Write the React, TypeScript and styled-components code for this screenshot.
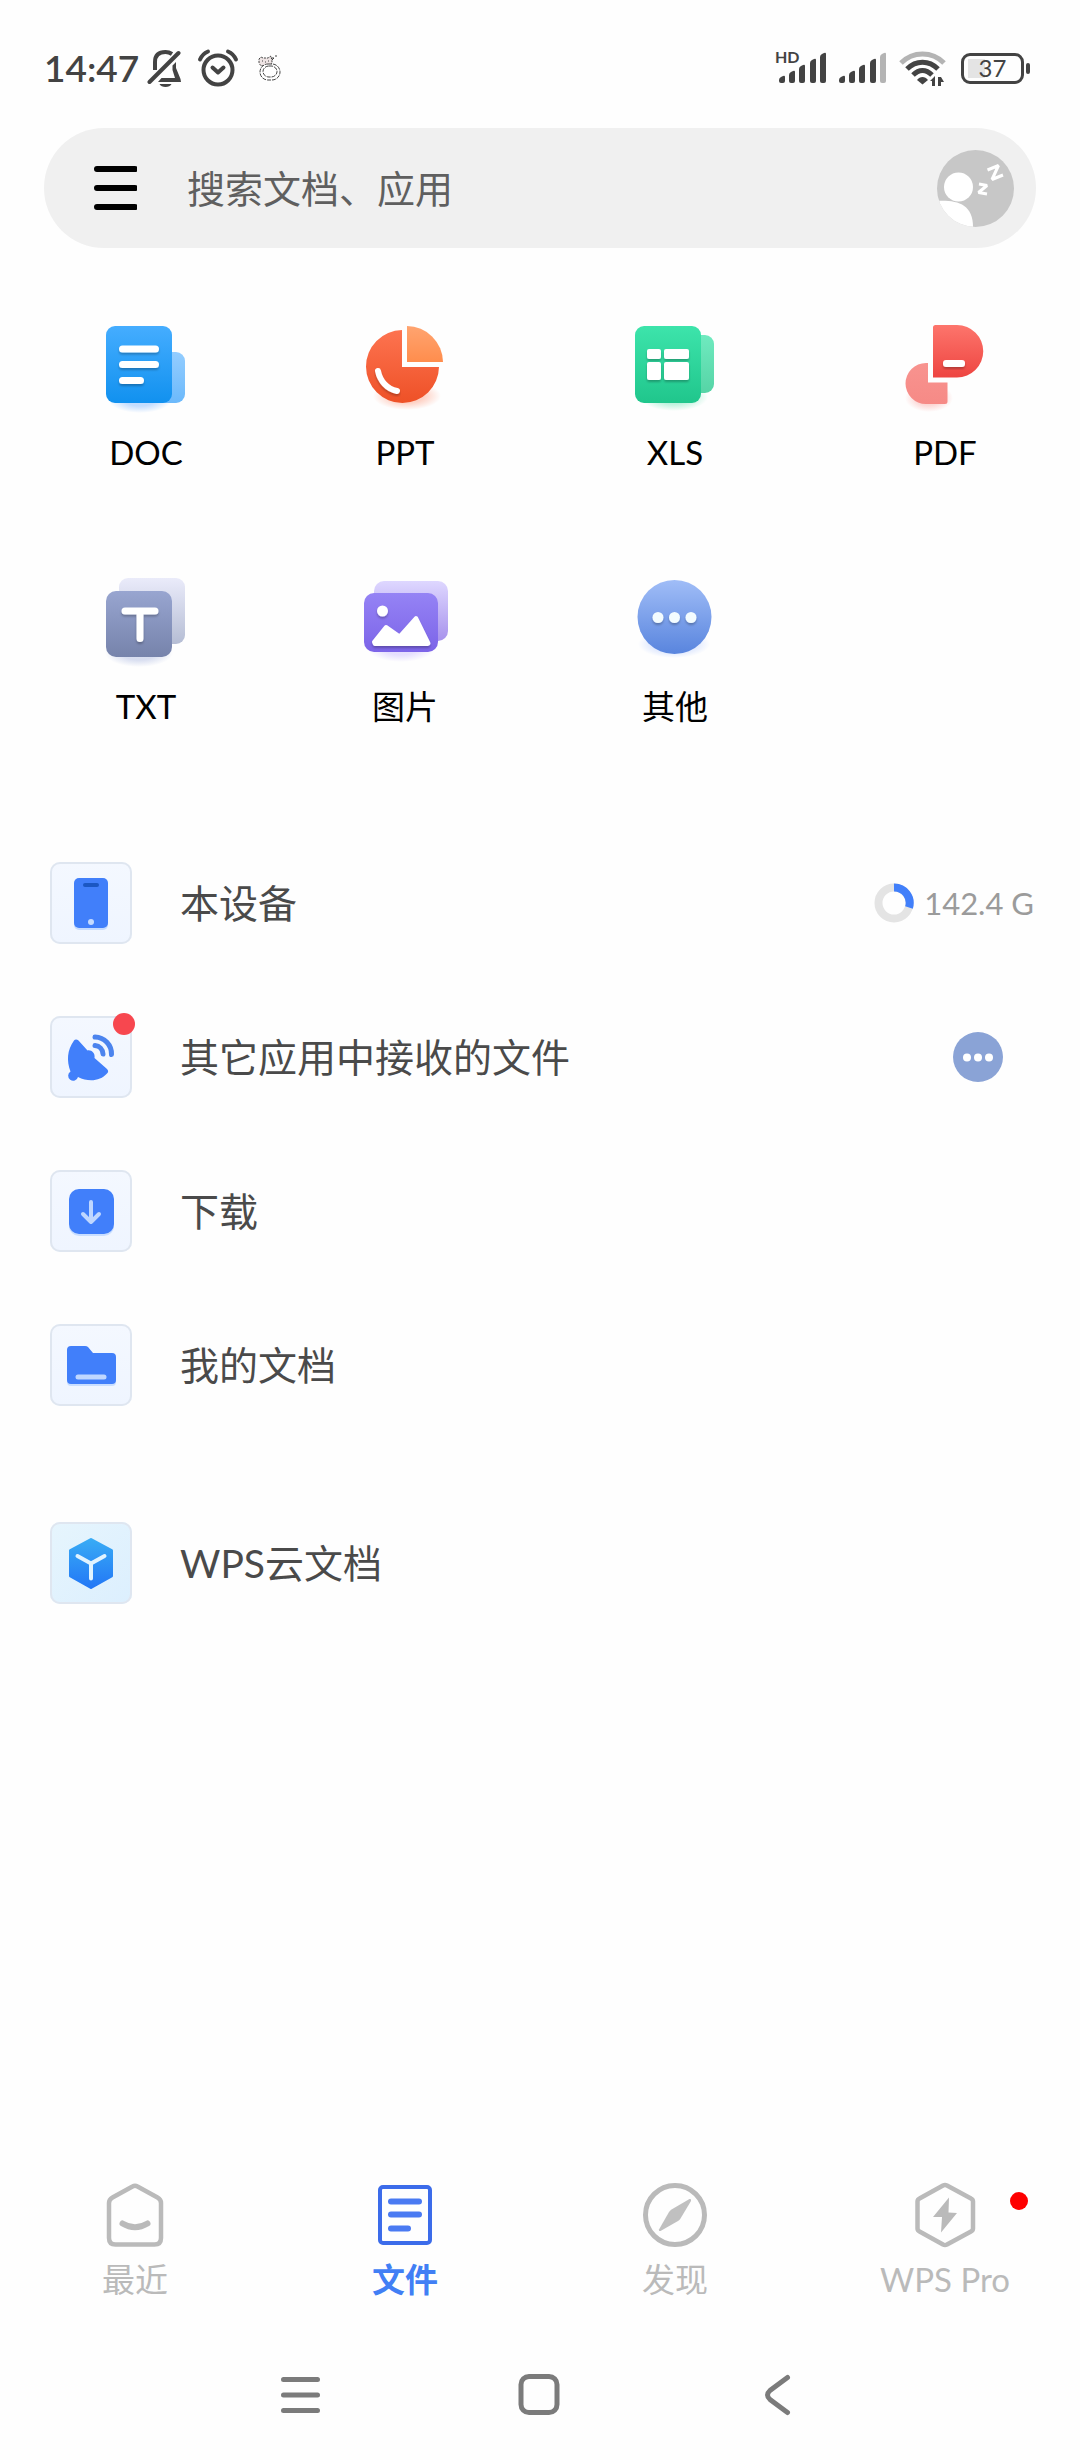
import React from "react";
import styled, { createGlobalStyle, css } from "styled-components";

const GlobalStyle = createGlobalStyle`
  *, *::before, *::after { box-sizing: border-box; }
  body {
    margin: 0;
    background: #fefefe;
    font-family: Lato, "Noto Sans CJK SC", sans-serif;
    color: #000;
  }
  button, input {
    font: inherit;
    color: inherit;
    border: 0;
    padding: 0;
    margin: 0;
    background: none;
  }
  button { cursor: pointer; }
  svg { display: block; flex: none; }
`;

const Screen = styled.div`
  min-height: 100vh;
  display: flex;
  flex-direction: column;
`;

/* ---------- status bar ---------- */

const StatusBar = styled.header`
  display: flex;
  align-items: center;
  justify-content: space-between;
  height: 44px;
  margin-top: 46px;
  padding: 0 50px 0 44px;
  color: #434343;
`;

const StatusGroup = styled.div<{ $gap: number }>`
  display: flex;
  align-items: center;
  gap: ${(p) => p.$gap}px;
`;

const Clock = styled.time`
  font-size: 37px;
  line-height: 44px;
  font-weight: 600;
`;

const Battery = styled.div`
  position: relative;
  display: flex;
  align-items: center;
  justify-content: center;
  width: 63px;
  height: 31px;
  margin-right: 6px;
  border: 3px solid #434343;
  border-radius: 9px;
  background: linear-gradient(90deg, #e4e4e4 17px, transparent 17px) 4px 3px / 46px 19px no-repeat;
  font-size: 24px;
  line-height: 24px;
  &::after {
    content: "";
    position: absolute;
    right: -9px;
    top: 7px;
    width: 4px;
    height: 11px;
    border-radius: 2px;
    background: #434343;
  }
`;

/* ---------- search ---------- */

const SearchBar = styled.form`
  display: flex;
  align-items: center;
  height: 120px;
  margin: 38px 44px 0;
  padding: 0 22px 0 49px;
  border-radius: 60px;
  background: #f0f0f0;
`;

const SearchInput = styled.input`
  flex: 1;
  min-width: 0;
  height: 80px;
  margin: 0 24px 0 50px;
  font-size: 38px;
  color: #5f5f5f;
  outline: none;
  &::placeholder {
    color: #5f5f5f;
    opacity: 1;
  }
`;

/* ---------- file type grid ---------- */

const TypeGrid = styled.nav`
  display: grid;
  grid-template-columns: repeat(4, 1fr);
  row-gap: 100px;
  margin-top: 72px;
`;

const TypeButton = styled.button`
  display: flex;
  flex-direction: column;
  align-items: center;
  gap: 22px;
  font-size: 33px;
  line-height: 44px;
  &:nth-child(4n + 1) {
    padding-left: 22px;
  }
`;

/* ---------- locations ---------- */

const Main = styled.main`
  flex: 1;
`;

const Places = styled.ul<{ $top: number }>`
  display: flex;
  flex-direction: column;
  gap: 72px;
  margin: ${(p) => p.$top}px 0 0;
  padding: 0 46px 0 50px;
  list-style: none;
`;

const PlaceRow = styled.li`
  display: flex;
  align-items: center;
  height: 82px;
`;

const PlaceButton = styled.button`
  flex: 1;
  display: flex;
  align-items: center;
  gap: 48px;
  font-size: 39px;
  line-height: 56px;
  color: #4a4a4a;
  text-align: left;
`;

const Tile = styled.span<{ $cloud?: boolean }>`
  position: relative;
  flex: none;
  width: 82px;
  height: 82px;
  border-radius: 10px;
  box-shadow: inset 0 0 0 2px #dfe6f0;
  background: ${(p) =>
    p.$cloud
      ? "linear-gradient(135deg, #e6f5fd, #dceffe)"
      : "linear-gradient(180deg, #f4f8ff, #eff5ff)"};
`;

const Dot = styled.span<{ $size: number; $color: string; $top: number; $right: number }>`
  position: absolute;
  top: ${(p) => p.$top}px;
  right: ${(p) => p.$right}px;
  width: ${(p) => p.$size}px;
  height: ${(p) => p.$size}px;
  border-radius: 50%;
  background: ${(p) => p.$color};
`;

const Storage = styled.span`
  display: flex;
  align-items: center;
  gap: 10px;
  font-size: 31px;
  line-height: 40px;
  color: #9b9b9b;
`;

const MoreButton = styled.button`
  margin-right: 31px;
`;

/* ---------- bottom tabs ---------- */

const Tabs = styled.nav`
  display: grid;
  grid-template-columns: repeat(4, 1fr);
`;

const Tab = styled.button<{ $active?: boolean }>`
  position: relative;
  display: flex;
  flex-direction: column;
  align-items: center;
  gap: 10px;
  font-size: 33px;
  line-height: 40px;
  color: #bababa;
  ${(p) =>
    p.$active &&
    css`
      color: #417ff5;
      font-weight: 700;
    `}
`;

const SystemNav = styled.footer`
  display: grid;
  grid-template-columns: repeat(3, 240px);
  justify-content: center;
  margin: 72px 0 41px;
`;

const SystemButton = styled.button`
  display: flex;
  justify-content: center;
  height: 48px;
`;

/* ---------- status icons ---------- */

const MuteIcon = () => (
  <svg width="36" height="40" viewBox="0 0 36 40" fill="none" stroke="#434343" strokeWidth="4" strokeLinecap="round">
    <path d="M8 22V14C8 7 12 4 18.500 4C21 4 23.500 5 25 6" strokeLinecap="butt" />
    <path d="M2.500 34L31.500 5" />
    <path d="M29 14V20L33.500 31L34 34H11L14.500 30H28L25.500 22V17.500Z" fill="#434343" stroke="none" />
    <path d="M12.500 36H24.500C23 40 14 40 12.500 36Z" fill="#434343" stroke="none" />
  </svg>
);

const AlarmIcon = () => (
  <svg width="42" height="40" viewBox="0 0 42 40" fill="none" stroke="#434343" strokeWidth="4" strokeLinecap="round" strokeLinejoin="round">
    <circle cx="21" cy="22" r="14.500" />
    <path d="M15.500 19.500L21 24.500L26.500 19.500M3 11.500C4.500 8 7.500 5 11 3.500M39 11.500C37.500 8 34.500 5 31 3.500" />
  </svg>
);

const KittenIcon = () => (
  <svg width="26" height="28" viewBox="0 0 26 28" fill="none" stroke="#444" strokeWidth="1">
    <path d="M2 5L4 3L6 4H11L14 2L15 7C15 11 13 12 8 12C4 12 2 11 2 8Z" fill="#eee4e4" strokeDasharray="2 1" />
    <path d="M5 7H6M8 8H9M11 7H12" />
    <rect x="3" y="10" width="20" height="16" rx="8" fill="#fff" strokeDasharray="4 1" />
    <rect x="6" y="12" width="14" height="11" rx="6" strokeDasharray="4 1" />
    <path d="M15 4H17L15 6M18 2H20" />
  </svg>
);

const BARS = [
  [0, 23],
  [10, 18],
  [20, 12],
  [31, 6],
  [41, 0],
];

const SignalIcon = ({ hd, faded }: { hd?: boolean; faded?: boolean }) => (
  <svg width={hd ? 54 : 48} height="34" viewBox={hd ? "-6 -1 54 34" : "0 -1 48 34"} overflow="visible">
    {BARS.map(([x, y], i) => (
      <path
        key={x}
        d={`M${x} ${y + 5}Q${x} ${y + 3} ${x + 2} ${y + 2}L${x + 4} ${y + 1}Q${x + 6} ${y} ${x + 6} ${y + 2}V29Q${x + 6} 31 ${x + 4} 31H${x + 2}Q${x} 31 ${x} 29Z`}
        fill={faded && i === 4 ? "#b4b4b4" : "#434343"}
      />
    ))}
    {hd && (
      <text x="-4" y="11" fontSize="16" fontWeight="700" fill="#434343">
        HD
      </text>
    )}
  </svg>
);

const WifiIcon = () => (
  <svg width="50" height="38" viewBox="0 0 50 38" fill="none" stroke="#434343" strokeWidth="5">
    <path d="M2 14C14 2 33 2 45 14" stroke="#b4b4b4" />
    <path d="M8 20C17 11 30 11 39 20" />
    <path d="M14 26C20 20 27 20 33 26" />
    <path d="M18 31C21 27 26 27 29 31L23.500 35.500Z" fill="#434343" stroke="none" />
    <path d="M31 32L36 27V37H33V32ZM39 28H42L45 33H42V37H39Z" fill="#434343" stroke="none" />
  </svg>
);

/* ---------- search icons ---------- */

const MenuIcon = () => (
  <svg width="44" height="44" viewBox="0 0 44 44" stroke="#000" strokeWidth="6" strokeLinecap="round">
    <path d="M4 3H42M4 22H42M4 41H42" />
  </svg>
);

const AvatarIcon = () => (
  <svg width="77" height="77" viewBox="0 0 77 77">
    <defs>
      <clipPath id="avatar">
        <circle cx="38.500" cy="38.500" r="38.500" />
      </clipPath>
    </defs>
    <g clipPath="url(#avatar)">
      <rect width="77" height="77" fill="#c7c7c7" />
      <circle cx="21.500" cy="37" r="14.500" fill="#fff" />
      <path d="M0 51C20 50 36 54 36 77H0Z" fill="#fff" />
      <path d="M42 34L50 35.500L41.500 42.500L50 44" fill="none" stroke="#fff" strokeWidth="3" strokeLinejoin="bevel" />
      <path d="M50.500 20L61.500 15.500L55 29.500L66 25" fill="none" stroke="#fff" strokeWidth="3" strokeLinejoin="bevel" />
    </g>
  </svg>
);

/* ---------- file type icons ---------- */

const Gradient = ({ id, from, to }: { id: string; from: string; to: string }) => (
  <linearGradient id={id} x1="0" y1="0" x2="0" y2="1">
    <stop offset="0" stopColor={from} />
    <stop offset="1" stopColor={to} />
  </linearGradient>
);

const TypeIcon = ({
  id,
  shade,
  glow,
  children,
}: {
  id: string;
  shade: string;
  glow: [number, number, number];
  children: React.ReactNode;
}) => (
  <svg width="88" height="88" viewBox="0 0 88 88" overflow="visible">
    <defs>
      <radialGradient id={`${id}-glow`}>
        <stop offset="0.500" stopColor={shade} stopOpacity="0.450" />
        <stop offset="1" stopColor={shade} stopOpacity="0" />
      </radialGradient>
      <filter id={`${id}-drop`} x="-20%" y="-20%" width="140%" height="150%">
        <feDropShadow dx="0" dy="2" stdDeviation="1" floodColor="#000" floodOpacity="0.250" />
      </filter>
    </defs>
    <ellipse cx={glow[0]} cy={glow[1]} rx={glow[2]} ry="14" fill={`url(#${id}-glow)`} />
    {children}
  </svg>
);

const DocIcon = () => (
  <TypeIcon id="doc" shade="#7cb4ff" glow={[38, 79, 32]}>
    <defs>
      <Gradient id="doc-a" from="#45adff" to="#1191ef" />
      <Gradient id="doc-b" from="#93cdff" to="#6cb9fb" />
    </defs>
    <rect x="50" y="32" width="33" height="51" rx="9" fill="url(#doc-b)" />
    <rect x="4" y="6" width="66" height="77" rx="9" fill="url(#doc-a)" />
    <path d="M20.500 29H53.500M20.500 44.500H53.500M20.500 60.500H38.500" stroke="#fff" strokeWidth="7" strokeLinecap="round" filter="url(#doc-drop)" />
  </TypeIcon>
);

const PptIcon = () => (
  <TypeIcon id="ppt" shade="#ff9c80" glow={[46, 76, 34]}>
    <defs>
      <Gradient id="ppt-a" from="#fd7350" to="#ee5127" />
      <Gradient id="ppt-b" from="#ffa470" to="#ff8d4d" />
    </defs>
    <path d="M41 10A36.500 36.500 0 1 0 78 47H41Z" fill="url(#ppt-a)" />
    <path d="M46 6A36.500 36.500 0 0 1 82 42H46Z" fill="url(#ppt-b)" />
    <path d="M17 51C19 61 26 69 36 71" fill="none" stroke="#fff" strokeWidth="6" strokeLinecap="round" filter="url(#ppt-drop)" />
  </TypeIcon>
);

const XlsIcon = () => (
  <TypeIcon id="xls" shade="#6be3b4" glow={[43, 77, 34]}>
    <defs>
      <Gradient id="xls-a" from="#3de4ab" to="#20c68c" />
      <Gradient id="xls-b" from="#6feabf" to="#56d4a6" />
    </defs>
    <rect x="50" y="15" width="33" height="58" rx="9" fill="url(#xls-b)" />
    <rect x="4" y="6" width="66" height="77" rx="9" fill="url(#xls-a)" />
    <g fill="#fff" filter="url(#xls-drop)">
      <rect x="16" y="29" width="14" height="10" rx="2" />
      <rect x="33" y="29" width="25" height="10" rx="2" />
      <rect x="16" y="42" width="14" height="18" rx="2" />
      <rect x="33" y="42" width="25" height="18" rx="2" />
    </g>
  </TypeIcon>
);

const PdfIcon = () => (
  <TypeIcon id="pdf" shade="#f9a5a0" glow={[28, 78, 24]}>
    <defs>
      <Gradient id="pdf-a" from="#fd756c" to="#ee4541" />
      <Gradient id="pdf-b" from="#f8938f" to="#f68a86" />
    </defs>
    <path d="M34.500 5H56A26 26 0 0 1 56 57.500H32V7.500Q32 5 34.500 5Z" fill="url(#pdf-a)" />
    <path d="M27 43V62.500H46.500V81.500Q46.500 84 44 84H25A20.500 20.500 0 0 1 25 43Z" fill="url(#pdf-b)" />
    <rect x="42" y="40" width="22" height="7" rx="3" fill="#fff" filter="url(#pdf-drop)" />
  </TypeIcon>
);

const TxtIcon = () => (
  <TypeIcon id="txt" shade="#a9b6df" glow={[37, 79, 34]}>
    <defs>
      <Gradient id="txt-a" from="#98a5d0" to="#7683ab" />
      <Gradient id="txt-b" from="#eaebfa" to="#b5bdd4" />
    </defs>
    <rect x="17" y="4" width="66" height="66" rx="9" fill="url(#txt-b)" />
    <rect x="4" y="17" width="66" height="66" rx="10" fill="url(#txt-a)" />
    <path d="M23 37H53M38 37V64.500" stroke="#fff" strokeWidth="7" strokeLinecap="round" filter="url(#txt-drop)" />
  </TypeIcon>
);

const PictureIcon = () => (
  <TypeIcon id="pic" shade="#c8b8ff" glow={[40, 74, 34]}>
    <defs>
      <Gradient id="pic-a" from="#9583f5" to="#7c64e8" />
      <Gradient id="pic-b" from="#ded7ff" to="#a792ec" />
    </defs>
    <rect x="13" y="7" width="74" height="60" rx="10" fill="url(#pic-b)" />
    <rect x="3" y="19" width="74" height="59" rx="10" fill="url(#pic-a)" />
    <g fill="#fff" filter="url(#pic-drop)">
      <circle cx="21.500" cy="37" r="5.500" />
      <path d="M13 68L25 53L38.500 62.500L55 44L67.500 69.500L66 70H14Z" stroke="#fff" strokeWidth="4" strokeLinejoin="round" />
    </g>
  </TypeIcon>
);

const OtherIcon = () => (
  <TypeIcon id="etc" shade="#a9c2ff" glow={[43, 70, 36]}>
    <defs>
      <Gradient id="etc-a" from="#a0bdf7" to="#5985de" />
    </defs>
    <circle cx="43.500" cy="43" r="37" fill="url(#etc-a)" />
    <g fill="#f3fcff" filter="url(#etc-drop)">
      <circle cx="27" cy="43.500" r="5.500" />
      <circle cx="43.500" cy="43.500" r="5.500" />
      <circle cx="60" cy="43.500" r="5.500" />
    </g>
  </TypeIcon>
);

/* ---------- location icons ---------- */

const PhoneIcon = () => (
  <svg width="82" height="82" viewBox="0 0 82 82">
    <rect x="24" y="18" width="34" height="50" rx="5" fill="#c5dbff" />
    <rect x="24" y="16" width="34" height="50" rx="5" fill="#417ffa" />
    <rect x="33" y="21" width="16" height="4" rx="2" fill="#1b57c2" />
    <circle cx="41" cy="60" r="3" fill="#c5dbff" />
  </svg>
);

const DishIcon = () => (
  <svg width="82" height="82" viewBox="0 0 82 82">
    <path
      d="M24 24.500C25 23 27 23 28.500 24.500L37.500 34.500C41 33.500 45.500 37 44.500 42L57 53C58.500 54.500 58.500 56 57 57.500C50 65.500 38 66 28 61A5 5 0 1 1 20.500 55.500C16.500 45 17 34 24 24.500Z"
      fill="#417ffa"
    />
    <path d="M45 21A17 17 0 0 1 61.500 38.500M45 29.500A9 9 0 0 1 53 38" fill="none" stroke="#4c84ee" strokeWidth="5" strokeLinecap="round" />
  </svg>
);

const DownloadIcon = () => (
  <svg width="82" height="82" viewBox="0 0 82 82">
    <rect x="19" y="21" width="45" height="45" rx="10" fill="#c9deff" />
    <rect x="19" y="19" width="45" height="45" rx="10" fill="#417ffa" />
    <path d="M41 32V52M33 44L41 52L49 44" fill="none" stroke="#bfd7ff" strokeWidth="4" strokeLinecap="round" strokeLinejoin="round" />
  </svg>
);

const FolderIcon = () => (
  <svg width="82" height="82" viewBox="0 0 82 82">
    <path d="M17 40H66V58Q66 62 62 62H21Q17 62 17 58Z" fill="#c9deff" />
    <path d="M17 26Q17 22 21 22H35Q37 22 38 23L43 29H62Q66 29 66 33V56Q66 60 62 60H21Q17 60 17 56Z" fill="#417ffa" />
    <path d="M28 53H54" stroke="#bfd7ff" strokeWidth="5" strokeLinecap="round" />
  </svg>
);

const CloudCubeIcon = () => (
  <svg width="82" height="82" viewBox="0 0 82 82">
    <defs>
      <Gradient id="cube" from="#38abf5" to="#2378f6" />
    </defs>
    <path d="M41 17.500L61.500 28.500V54L41 65.500L20.500 54V28.500Z" fill="url(#cube)" stroke="url(#cube)" strokeWidth="3" strokeLinejoin="round" />
    <path d="M27.500 34L41 41.500L54.500 34M41 41.500V56.500" fill="none" stroke="#e0f3ff" strokeWidth="4" strokeLinecap="round" />
  </svg>
);

const UsageRing = () => (
  <svg width="40" height="40" viewBox="0 0 40 40" fill="none" strokeWidth="8">
    <circle cx="20" cy="20" r="15.500" stroke="#e4e4e4" />
    <path d="M20 4.500A15.500 15.500 0 0 1 35 24.500" stroke="#417ffa" />
  </svg>
);

const MoreIcon = () => (
  <svg width="50" height="50" viewBox="0 0 50 50" fill="#fff">
    <circle cx="25" cy="25" r="25" fill="#8aa3d6" />
    <circle cx="14" cy="25.500" r="4" />
    <circle cx="25" cy="25.500" r="4" />
    <circle cx="36" cy="25.500" r="4" />
  </svg>
);

/* ---------- tab icons ---------- */

const RecentIcon = () => (
  <svg width="68" height="68" viewBox="0 0 68 68" fill="none" stroke="#bababa" strokeWidth="4.500" strokeLinejoin="round">
    <path d="M31.500 5.500Q34 4 36.500 5.500L56.500 16.500Q60 18.500 60 22V57Q60 63.500 53.500 63.500H14.500Q8 63.500 8 57V22Q8 18.500 11.500 16.500Z" />
    <path d="M21.500 42.500Q34 50 46.500 42.500" strokeWidth="6" strokeLinecap="round" />
  </svg>
);

const FilesIcon = () => (
  <svg width="68" height="68" viewBox="0 0 68 68" fill="none" stroke="#3c6cea" strokeWidth="4">
    <rect x="9" y="6" width="50" height="56" rx="3" />
    <path d="M20 20.500H48M20 33.500H48M20 47.500H37" stroke="#4a7af2" strokeWidth="6" strokeLinecap="round" />
  </svg>
);

const DiscoverIcon = () => (
  <svg width="68" height="68" viewBox="0 0 68 68" fill="none" stroke="#bababa" strokeWidth="5">
    <circle cx="34" cy="34" r="29.500" />
    <path d="M48.500 18L30.500 28.500Q29 29.500 28 31L18 48.500Q17.500 50.500 19.500 50L37 40Q38.500 39 39.500 37.500L50 20Q50.500 17.500 48.500 18Z" fill="#c0c0c0" stroke="none" />
  </svg>
);

const ProIcon = () => (
  <svg width="68" height="68" viewBox="-2 0 68 68" fill="none" stroke="#bababa" strokeWidth="4.500" strokeLinejoin="round">
    <path d="M30 4.500Q32 3.500 34 4.500L58 17.500Q60 18.500 60 20.500V47.500Q60 49.500 58 50.500L34 63.500Q32 64.500 30 63.500L6.500 50.500Q4.500 49.500 4.500 47.500V20.500Q4.500 18.500 6.500 17.500Z" />
    <path d="M36 16.500L35.500 31.500L44 32L28 51.500L29 36H20Z" fill="#bababa" stroke="none" />
  </svg>
);

/* ---------- system nav icons ---------- */

const RecentsKey = () => (
  <svg width="48" height="48" viewBox="0 0 48 48" stroke="#7b7b7b" strokeWidth="5" strokeLinecap="round">
    <path d="M7.500 8.500H41.500M7.500 24H41.500M7.500 39.500H41.500" />
  </svg>
);

const HomeKey = () => (
  <svg width="48" height="48" viewBox="0 0 48 48" fill="none" stroke="#7b7b7b" strokeWidth="5">
    <rect x="5" y="5.500" width="36" height="36" rx="8" />
  </svg>
);

const BackKey = () => (
  <svg width="48" height="48" viewBox="0 0 48 48" fill="none" stroke="#7b7b7b" strokeWidth="5" strokeLinecap="round">
    <path d="M31.500 6.500L14 19.500Q9 24 14 28.500L31.500 41.500" />
  </svg>
);

/* ---------- data ---------- */

const TYPES = [
  { label: "DOC", Icon: DocIcon },
  { label: "PPT", Icon: PptIcon },
  { label: "XLS", Icon: XlsIcon },
  { label: "PDF", Icon: PdfIcon },
  { label: "TXT", Icon: TxtIcon },
  { label: "图片", Icon: PictureIcon },
  { label: "其他", Icon: OtherIcon },
];

const TABS = [
  { label: "最近", Icon: RecentIcon },
  { label: "文件", Icon: FilesIcon, active: true },
  { label: "发现", Icon: DiscoverIcon },
  { label: "WPS Pro", Icon: ProIcon, dot: true },
];

const Place = ({
  label,
  icon,
  cloud,
  dot,
  children,
}: {
  label: string;
  icon: React.ReactNode;
  cloud?: boolean;
  dot?: boolean;
  children?: React.ReactNode;
}) => (
  <PlaceRow>
    <PlaceButton type="button">
      <Tile $cloud={cloud}>
        {icon}
        {dot && <Dot $size={22} $color="#f7474f" $top={-3} $right={-3} />}
      </Tile>
      {label}
    </PlaceButton>
    {children}
  </PlaceRow>
);

export default function App() {
  return (
    <Screen>
      <GlobalStyle />
      <StatusBar>
        <StatusGroup $gap={14}>
          <StatusGroup $gap={8}>
            <Clock>14:47</Clock>
            <MuteIcon />
          </StatusGroup>
          <StatusGroup $gap={18}>
            <AlarmIcon />
            <KittenIcon />
          </StatusGroup>
        </StatusGroup>
        <StatusGroup $gap={12}>
          <SignalIcon hd />
          <SignalIcon faded />
          <WifiIcon />
          <Battery>37</Battery>
        </StatusGroup>
      </StatusBar>

      <SearchBar role="search" onSubmit={(e) => e.preventDefault()}>
        <button type="button" aria-label="菜单">
          <MenuIcon />
        </button>
        <SearchInput type="text" aria-label="搜索" placeholder="搜索文档、应用" />
        <button type="button" aria-label="账号">
          <AvatarIcon />
        </button>
      </SearchBar>

      <Main>
        <TypeGrid>
          {TYPES.map(({ label, Icon }) => (
            <TypeButton key={label} type="button">
              <Icon />
              {label}
            </TypeButton>
          ))}
        </TypeGrid>

        <Places $top={134}>
          <Place label="本设备" icon={<PhoneIcon />}>
            <Storage>
              <UsageRing />
              142.4 G
            </Storage>
          </Place>
          <Place label="其它应用中接收的文件" icon={<DishIcon />} dot>
            <MoreButton type="button" aria-label="更多">
              <MoreIcon />
            </MoreButton>
          </Place>
          <Place label="下载" icon={<DownloadIcon />} />
          <Place label="我的文档" icon={<FolderIcon />} />
        </Places>

        <Places $top={116}>
          <Place label="WPS云文档" icon={<CloudCubeIcon />} cloud />
        </Places>
      </Main>

      <Tabs>
        {TABS.map(({ label, Icon, active, dot }) => (
          <Tab key={label} type="button" $active={active}>
            <Icon />
            {label}
            {dot && <Dot $size={18} $color="#fe0000" $top={11} $right={52} />}
          </Tab>
        ))}
      </Tabs>

      <SystemNav>
        <SystemButton type="button" aria-label="最近任务">
          <RecentsKey />
        </SystemButton>
        <SystemButton type="button" aria-label="主页">
          <HomeKey />
        </SystemButton>
        <SystemButton type="button" aria-label="返回">
          <BackKey />
        </SystemButton>
      </SystemNav>
    </Screen>
  );
}
